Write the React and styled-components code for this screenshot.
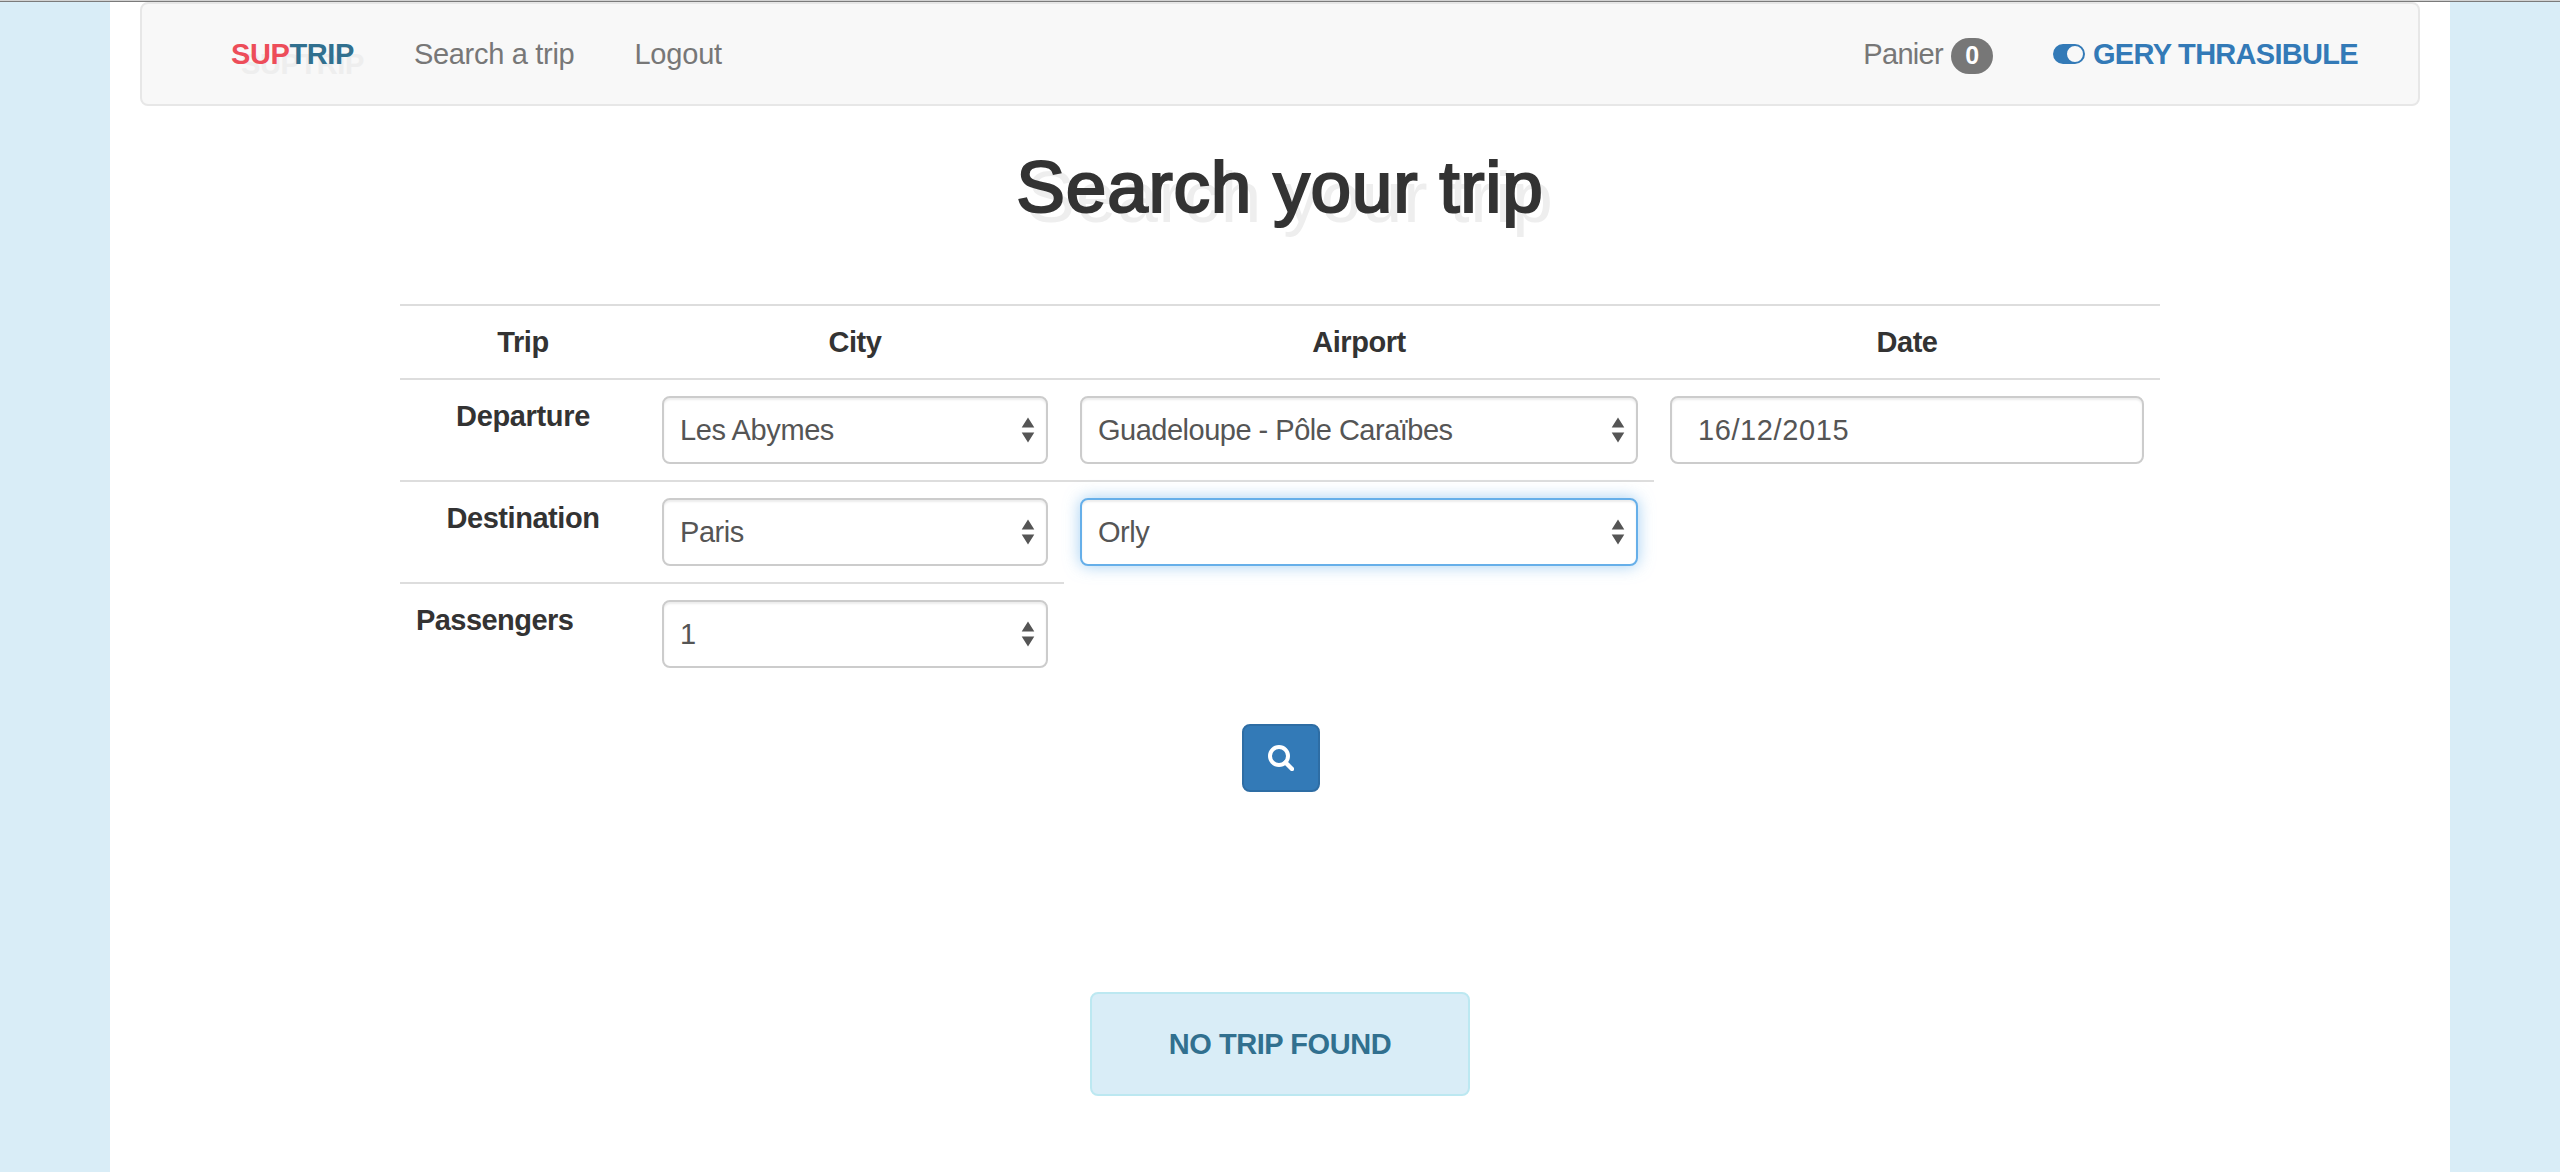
import React from 'react';
import styled, { createGlobalStyle, css } from 'styled-components';

const GlobalStyle = createGlobalStyle`
  *, *::before, *::after { box-sizing: border-box; }
  body {
    margin: 0;
    background: #d9edf7;
    color: #333;
    font: 29px/40px "Liberation Sans", Arial, sans-serif;
  }
`;

const Window = styled.div`
  height: 1172px;
  overflow: hidden;
  display: flex;
  flex-direction: column;
`;

const WindowEdge = styled.div`
  height: 2px;
  flex: none;
  background: #d2d2d2;
  border-bottom: 1px solid #7b7b7b;
`;

const Page = styled.main`
  flex: 1;
  width: 2340px;
  margin: 0 auto;
  padding: 0 30px;
  background: #fff;
  display: flex;
  flex-direction: column;
  align-items: center;
`;

const Navbar = styled.nav`
  width: 100%;
  height: 104px;
  padding: 0 60px 0 89px;
  background: #f8f8f8;
  border: 2px solid #e7e7e7;
  border-radius: 8px;
  display: flex;
  align-items: center;
`;

const spaced = css`
  letter-spacing: ${({ $track = -0.45 }) => $track}px;
`;

const Brand = styled.a`
  font-weight: bold;
  color: #31708f;
  text-shadow: 10px 10px 0 #eee;
  white-space: nowrap;
  ${spaced}
`;

const BrandAccent = styled.span`
  color: #ed4d59;
`;

const NavLink = styled.a`
  margin-left: 60px;
  color: #777;
  white-space: nowrap;
  display: flex;
  align-items: center;
  ${spaced}
`;

const NavRight = styled.div`
  margin-left: auto;
  display: flex;
  align-items: center;
`;

const Badge = styled.span`
  width: 42px;
  height: 36px;
  margin: 4px 0 0 8px;
  border-radius: 20px;
  background: #777;
  color: #fff;
  font-size: 25px;
  line-height: 35px;
  font-weight: bold;
  text-align: center;
`;

const UserName = styled.span`
  color: #337ab7;
  font-weight: bold;
`;

const ToggleSvg = styled.svg`
  width: 32px;
  height: 20px;
  margin-right: 8px;
  display: block;
`;

const Title = styled.h1`
  margin: 41px 0 0;
  font-size: 73px;
  line-height: 80px;
  font-weight: normal;
  -webkit-text-stroke: 2.2px #333;
  text-shadow: 10px 10px 0 #eee;
  ${spaced}
`;

const Table = styled.div`
  width: 1760px;
  margin-top: 77px;
  display: grid;
  grid-template-columns: 246px 418px 590px 506px;
`;

const Cell = styled.div`
  padding: 16px;
  border-top: ${({ $blank }) => ($blank ? 'none' : '2px solid #ddd')};
`;

const HeadCell = styled(Cell)`
  font-weight: bold;
  text-align: ${({ $align = 'center' }) => $align};
  ${spaced}
`;

const control = css`
  height: 68px;
  border: 2px solid #ccc;
  border-radius: 8px;
  background: #fff;
  box-shadow: inset 0 2px 2px rgba(0, 0, 0, 0.075);
  color: #555;
  display: flex;
  align-items: center;
`;

const SelectBox = styled.div`
  ${control}
  padding: 0 11px 0 16px;
  justify-content: space-between;
  ${spaced}
  ${({ $focused }) =>
    $focused &&
    css`
      border-color: #66afe9;
      box-shadow: inset 0 2px 2px rgba(0, 0, 0, 0.075), 0 0 16px rgba(102, 175, 233, 0.6);
    `}
`;

const DateBox = styled.div`
  ${control}
  padding: 0 26px;
  ${spaced}
`;

const ArrowsSvg = styled.svg`
  width: 14px;
  height: 26px;
`;

const SearchButton = styled.button`
  width: 78px;
  height: 68px;
  margin: 40px 0 0 2px;
  padding: 0;
  border: 2px solid #2e6da4;
  border-radius: 8px;
  background: #337ab7;
  display: flex;
  align-items: center;
  justify-content: center;
`;

const SearchSvg = styled.svg`
  width: 26px;
  height: 26px;
`;

const Alert = styled.div`
  width: 380px;
  height: 104px;
  margin-top: 200px;
  border: 2px solid #bce8f1;
  border-radius: 8px;
  background: #d9edf7;
  color: #31708f;
  font-weight: bold;
  line-height: 100px;
  text-align: center;
  ${spaced}
`;

const ToggleIcon = () => (
  <ToggleSvg viewBox="0 0 32 20">
    <path
      fill="#337ab7"
      fillRule="evenodd"
      d="M10 0H22A10 10 0 0 1 22 20H10A10 10 0 0 1 10 0ZM22 2A8 8 0 1 0 22 18A8 8 0 1 0 22 2Z"
    />
  </ToggleSvg>
);

const Arrows = () => (
  <ArrowsSvg viewBox="0 0 14 26">
    <path fill="#555" d="M7 0.5L13.3 10.5H0.7ZM7 25.5L13.3 15.5H0.7Z" />
  </ArrowsSvg>
);

const SearchIcon = () => (
  <SearchSvg viewBox="0 0 26 26" fill="none" stroke="#fff">
    <circle cx="11" cy="11" r="9" strokeWidth="4" />
    <path d="M17.5 17.5L24 24" strokeWidth="4.4" strokeLinecap="round" />
  </SearchSvg>
);

const Select = ({ value, focused, track }) => (
  <SelectBox $focused={focused} $track={track}>
    {value}
    <Arrows />
  </SelectBox>
);

export default function App() {
  return (
    <>
      <GlobalStyle />
      <Window>
        <WindowEdge />
        <Page>
          <Navbar>
            <Brand $track={-0.4}>
              <BrandAccent>SUP</BrandAccent>TRIP
            </Brand>
            <NavLink $track={-0.3}>Search a trip</NavLink>
            <NavLink $track={-0.2}>Logout</NavLink>
            <NavRight>
              <NavLink $track={-0.7}>
                Panier<Badge>0</Badge>
              </NavLink>
              <NavLink $track={-0.7}>
                <ToggleIcon />
                <UserName>GERY THRASIBULE</UserName>
              </NavLink>
            </NavRight>
          </Navbar>
          <Title $track={0.75}>Search your trip</Title>
          <Table>
            <HeadCell>Trip</HeadCell>
            <HeadCell>City</HeadCell>
            <HeadCell>Airport</HeadCell>
            <HeadCell>Date</HeadCell>

            <HeadCell $track={-0.35}>Departure</HeadCell>
            <Cell><Select value="Les Abymes" track={-0.4} /></Cell>
            <Cell><Select value="Guadeloupe - Pôle Caraïbes" track={-0.5} /></Cell>
            <Cell><DateBox $track={0.6}>16/12/2015</DateBox></Cell>

            <HeadCell>Destination</HeadCell>
            <Cell><Select value="Paris" /></Cell>
            <Cell><Select value="Orly" focused /></Cell>
            <Cell $blank />

            <HeadCell $align="left" $track={-0.55}>Passengers</HeadCell>
            <Cell><Select value="1" /></Cell>
            <Cell $blank />
            <Cell $blank />
          </Table>
          <SearchButton aria-label="Search"><SearchIcon /></SearchButton>
          <Alert>NO TRIP FOUND</Alert>
        </Page>
      </Window>
    </>
  );
}
